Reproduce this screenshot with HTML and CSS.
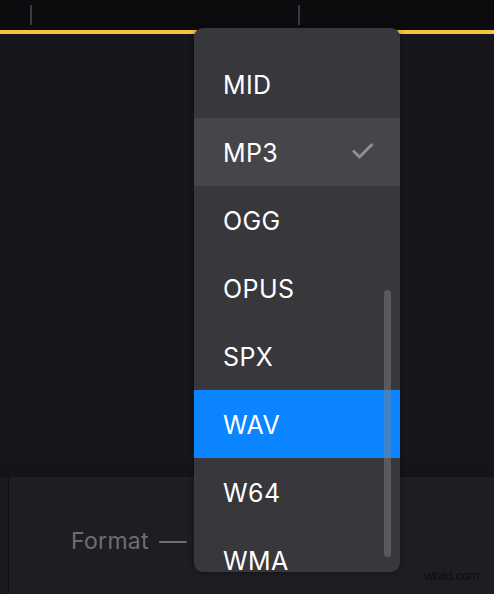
FILE: index.html
```html
<!DOCTYPE html>
<html>
<head>
<meta charset="utf-8">
<link rel="stylesheet" href="styles.css">
</head>
<body>
<div class="app">
  <div class="topbar">
    <span class="tick"></span>
    <span class="tick"></span>
  </div>
  <div class="accent"></div>
  <div class="main"></div>
  <div class="bottom">
    <div class="side"></div>
    <div class="field">
      <span class="label">Format</span><span class="dash">—</span>
    </div>
    <span class="watermark">wtvid.com</span>
  </div>
  <div class="dropdown">
    <ul class="list">
      <li class="item">MID</li>
      <li class="item hover">MP3
        <svg class="check" width="24" height="18" viewBox="0 0 24 18"><path d="M2 8.5 L8.5 15 L21.5 2" fill="none" stroke="#8e8e93" stroke-width="3"/></svg>
      </li>
      <li class="item">OGG</li>
      <li class="item">OPUS</li>
      <li class="item">SPX</li>
      <li class="item selected">WAV</li>
      <li class="item">W64</li>
      <li class="item">WMA</li>
    </ul>
    <div class="scrollbar"></div>
  </div>
</div>
</body>
</html>
```

FILE: styles.css
```css
* { box-sizing: border-box; }
html, body {
  margin: 0;
  padding: 0;
  background: #16161a;
}
body {
  width: 494px;
  height: 594px;
  overflow: hidden;
  font-family: Inter, "Liberation Sans", sans-serif;
}
.app {
  position: relative;
  width: 494px;
  height: 594px;
  display: flex;
  flex-direction: column;
}
.topbar {
  height: 30px;
  background: #0c0c0e;
  display: flex;
  align-items: flex-start;
  padding-left: 30px;
  padding-top: 5px;
  gap: 266px;
}
.tick {
  width: 2px;
  height: 20px;
  background: #3a3a3e;
}
.accent {
  height: 4px;
  background: #f6c443;
}
.main {
  flex: 1;
  background: linear-gradient(#17161a, #17161a 94%, #141317);
}
.bottom {
  height: 117px;
  background: #1e1d22;
  display: flex;
  position: relative;
}
.side {
  width: 9px;
  background: #1a191d;
  border-right: 1px solid #121114;
}
.field {
  flex: 1;
  padding-left: 62px;
  padding-top: 50px;
  display: flex;
  align-items: baseline;
  height: 80px;
  gap: 10px;
}
.label, .dash {
  color: #6e6d72;
  font-size: 23px;
  letter-spacing: 0.3px;
}
.dash {
  display: inline-block;
  transform: scaleX(1.2);
  transform-origin: left center;
}
.watermark {
  position: absolute;
  left: 424px;
  top: 91px;
  font-family: "Liberation Sans", sans-serif;
  font-size: 13px;
  color: #0d0d0f;
  letter-spacing: -0.3px;
}
.dropdown {
  position: absolute;
  left: 194px;
  top: 28px;
  width: 206px;
  height: 544px;
  background: #38373c;
  border-radius: 9px;
  overflow: hidden;
  box-shadow: 0 0 6px rgba(0,0,0,0.35);
}
.list {
  list-style: none;
  margin: 0;
  padding: 22px 0 0 0;
}
.item {
  position: relative;
  height: 68px;
  line-height: 70px;
  padding-left: 29px;
  font-size: 25px;
  color: #ffffff;
  letter-spacing: 0.4px;
}
.item.hover {
  background: #464549;
}
.item.selected {
  background: #0a84ff;
}
.check {
  position: absolute;
  left: 157px;
  top: 24px;
}
.scrollbar {
  position: absolute;
  left: 190px;
  top: 262px;
  width: 7px;
  height: 267px;
  border-radius: 4px;
  background: rgba(130,130,136,0.45);
}
```
